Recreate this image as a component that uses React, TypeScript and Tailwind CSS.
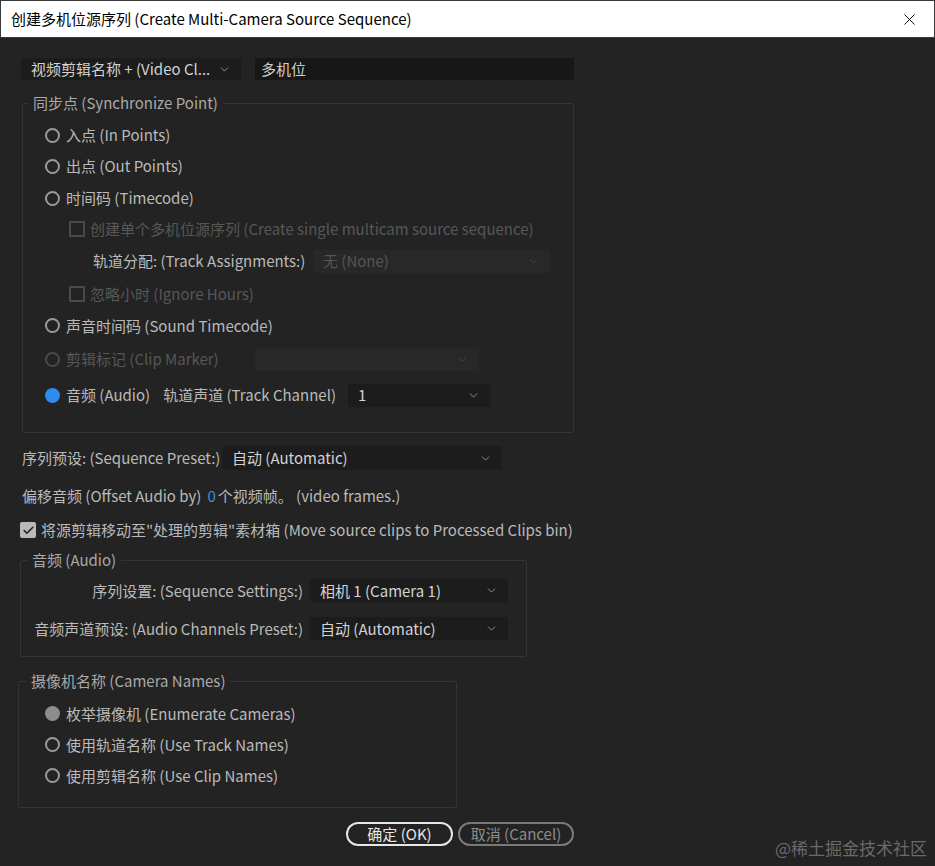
import React from "react";
import { ChevronDown, X, Check } from "lucide-react";

type RadioProps = { label: React.ReactNode; checked?: boolean; disabled?: boolean; gray?: boolean };

const Radio: React.FC<RadioProps> = ({ label, checked, disabled, gray }) => {
  let dot = "border-2 border-[#9a9a9a]";
  if (disabled) dot = "border-2 border-[#4a4a4a]";
  if (checked) dot = "bg-[#2d8ceb]";
  if (gray) dot = "bg-[#8d8d8d]";
  return (
    <div className="flex items-center gap-[6px]">
      <span className={`inline-block h-[15px] w-[15px] shrink-0 rounded-full ${dot}`} />
      <span className={disabled ? "text-[#575757]" : "text-[#bababa]"}>{label}</span>
    </div>
  );
};

const Checkbox: React.FC<{ label: React.ReactNode; checked?: boolean; disabled?: boolean }> = ({
  label,
  checked,
  disabled,
}) => (
  <div className="flex items-center gap-[5px]">
    {checked ? (
      <span className="flex h-[16px] w-[16px] items-center justify-center rounded-[2px] bg-[#b9b9b9]">
        <Check size={13} strokeWidth={3} className="text-[#232323]" />
      </span>
    ) : (
      <span className="inline-block h-[16px] w-[16px] rounded-[1px] border-2 border-[#4a4a4a]" />
    )}
    <span className={disabled ? "text-[#575757]" : "text-[#bababa]"}>{label}</span>
  </div>
);

const Select: React.FC<{ value?: string; className?: string; disabled?: boolean }> = ({ value, className, disabled }) => (
  <div
    className={`flex items-center justify-between rounded-[2px] pl-[10px] pr-[10px] ${
      disabled ? "bg-[#282828] text-[#555]" : "bg-[#1c1c1c] text-[#d2d2d2]"
    } ${className ?? ""}`}
  >
    <span className="truncate">{value}</span>
    <ChevronDown size={13} strokeWidth={1.5} className={disabled ? "text-[#4a4a4a]" : "text-[#a8a8a8]"} />
  </div>
);

export default function App() {
  return (
    <div className="relative h-[866px] w-[935px] overflow-hidden bg-[#232323] font-['Noto_Sans_CJK_SC','Noto_Sans',sans-serif] text-[15px] leading-[20px] text-[#bababa]">
      {/* title bar */}
      <div className="flex h-[38px] items-center justify-between border border-[#3a3a3a] bg-white pl-[10px] pr-[15px] text-[15px] text-black">
        <span>创建多机位源序列 (Create Multi-Camera Source Sequence)</span>
        <X size={19} strokeWidth={1.2} />
      </div>

      {/* name row */}
      <div className="ml-[21px] mt-[20px] flex gap-[14px]">
        <Select value="视频剪辑名称 + (Video Cl..." className="h-[22px] w-[220px] pl-[7px]" />
        <div className="flex h-[22px] w-[319px] items-center bg-[#171717] pl-[6px] text-[#cfcfcf]">多机位</div>
      </div>

      {/* synchronize point */}
      <fieldset className="ml-[22px] mt-[13px] w-[552px] rounded-[2px] border border-[#343434] pb-[19px]">
        <legend className="ml-[5px] px-[5px] text-[#a9a9a9]">同步点 (Synchronize Point)</legend>
        <div className="pl-[22px]">
          <div className="mt-[7px] flex h-[30px] items-center">
            <Radio label="入点 (In Points)" />
          </div>
          <div className="flex h-[32px] items-center">
            <Radio label="出点 (Out Points)" />
          </div>
          <div className="flex h-[32px] items-center">
            <Radio label="时间码 (Timecode)" />
          </div>
          <div className="flex h-[30px] items-center pl-[24px]">
            <Checkbox disabled label="创建单个多机位源序列 (Create single multicam source sequence)" />
          </div>
          <div className="flex h-[34px] items-center pl-[48px]">
            <span className="w-[220px]">轨道分配: (Track Assignments:)</span>
            <Select disabled value="无 (None)" className="h-[23px] w-[237px]" />
          </div>
          <div className="flex h-[32px] items-center pl-[24px]">
            <Checkbox disabled label="忽略小时 (Ignore Hours)" />
          </div>
          <div className="flex h-[31px] items-center">
            <Radio label="声音时间码 (Sound Timecode)" />
          </div>
          <div className="flex h-[36px] items-center">
            <Radio disabled label="剪辑标记 (Clip Marker)" />
            <Select disabled className="ml-[36px] h-[23px] w-[224px]" />
          </div>
          <div className="flex h-[36px] items-center">
            <Radio checked label="音频 (Audio)" />
            <span className="ml-[13px]">轨道声道 (Track Channel)</span>
            <Select value="1" className="ml-[12px] h-[23px] w-[142px]" />
          </div>
        </div>
      </fieldset>

      {/* sequence preset */}
      <div className="ml-[22px] mt-[13px] flex h-[24px] items-center">
        <span className="w-[200px]">序列预设: (Sequence Preset:)</span>
        <Select value="自动 (Automatic)" className="h-[24px] w-[280px]" />
      </div>

      <div className="ml-[22px] mt-[14px] flex h-[24px] items-center">
        <span>偏移音频 (Offset Audio by)</span>
        <span className="ml-[6px] text-[#3a8fe0]">0</span>
        <span className="ml-[2px]">个视频帧。 (video frames.)</span>
      </div>

      <div className="ml-[20px] mt-[10px] flex h-[24px] items-center">
        <Checkbox checked label="将源剪辑移动至&quot;处理的剪辑&quot;素材箱 (Move source clips to Processed Clips bin)" />
      </div>

      {/* audio */}
      <fieldset className="ml-[20px] mt-[8px] w-[507px] rounded-[2px] border border-[#343434] pb-[16px]">
        <legend className="ml-[6px] px-[5px] text-[#a9a9a9]">音频 (Audio)</legend>
        <div className="mt-[9px] flex h-[23px] items-center">
          <span className="w-[282px] text-right">序列设置: (Sequence Settings:)</span>
          <Select value="相机 1 (Camera 1)" className="ml-[7px] h-[23px] w-[198px]" />
        </div>
        <div className="mt-[15px] flex h-[23px] items-center">
          <span className="w-[282px] text-right">音频声道预设: (Audio Channels Preset:)</span>
          <Select value="自动 (Automatic)" className="ml-[7px] h-[23px] w-[198px]" />
        </div>
      </fieldset>

      {/* camera names */}
      <fieldset className="ml-[18px] mt-[14px] w-[439px] rounded-[2px] border border-[#343434] pb-[16px]">
        <legend className="ml-[7px] px-[5px] text-[#a9a9a9]">摄像机名称 (Camera Names)</legend>
        <div className="pl-[26px]">
          <div className="mt-[7px] flex h-[31px] items-center">
            <Radio gray label="枚举摄像机 (Enumerate Cameras)" />
          </div>
          <div className="flex h-[31px] items-center">
            <Radio label="使用轨道名称 (Use Track Names)" />
          </div>
          <div className="flex h-[31px] items-center">
            <Radio label="使用剪辑名称 (Use Clip Names)" />
          </div>
        </div>
      </fieldset>

      {/* buttons */}
      <div className="ml-[346px] mt-[14px] flex gap-[5px]">
        <button className="flex h-[24px] w-[107px] items-center justify-center rounded-full border-2 border-[#e6e6e6] text-[#e6e6e6]">
          确定 (OK)
        </button>
        <button className="flex h-[24px] w-[116px] items-center justify-center rounded-full border-2 border-[#7a7a7a] text-[#8c8c8c]">
          取消 (Cancel)
        </button>
      </div>

      <span className="absolute bottom-[8px] right-[8px] text-[17px] text-[#6a6a6a]">@稀土掘金技术社区</span>
    </div>
  );
}
